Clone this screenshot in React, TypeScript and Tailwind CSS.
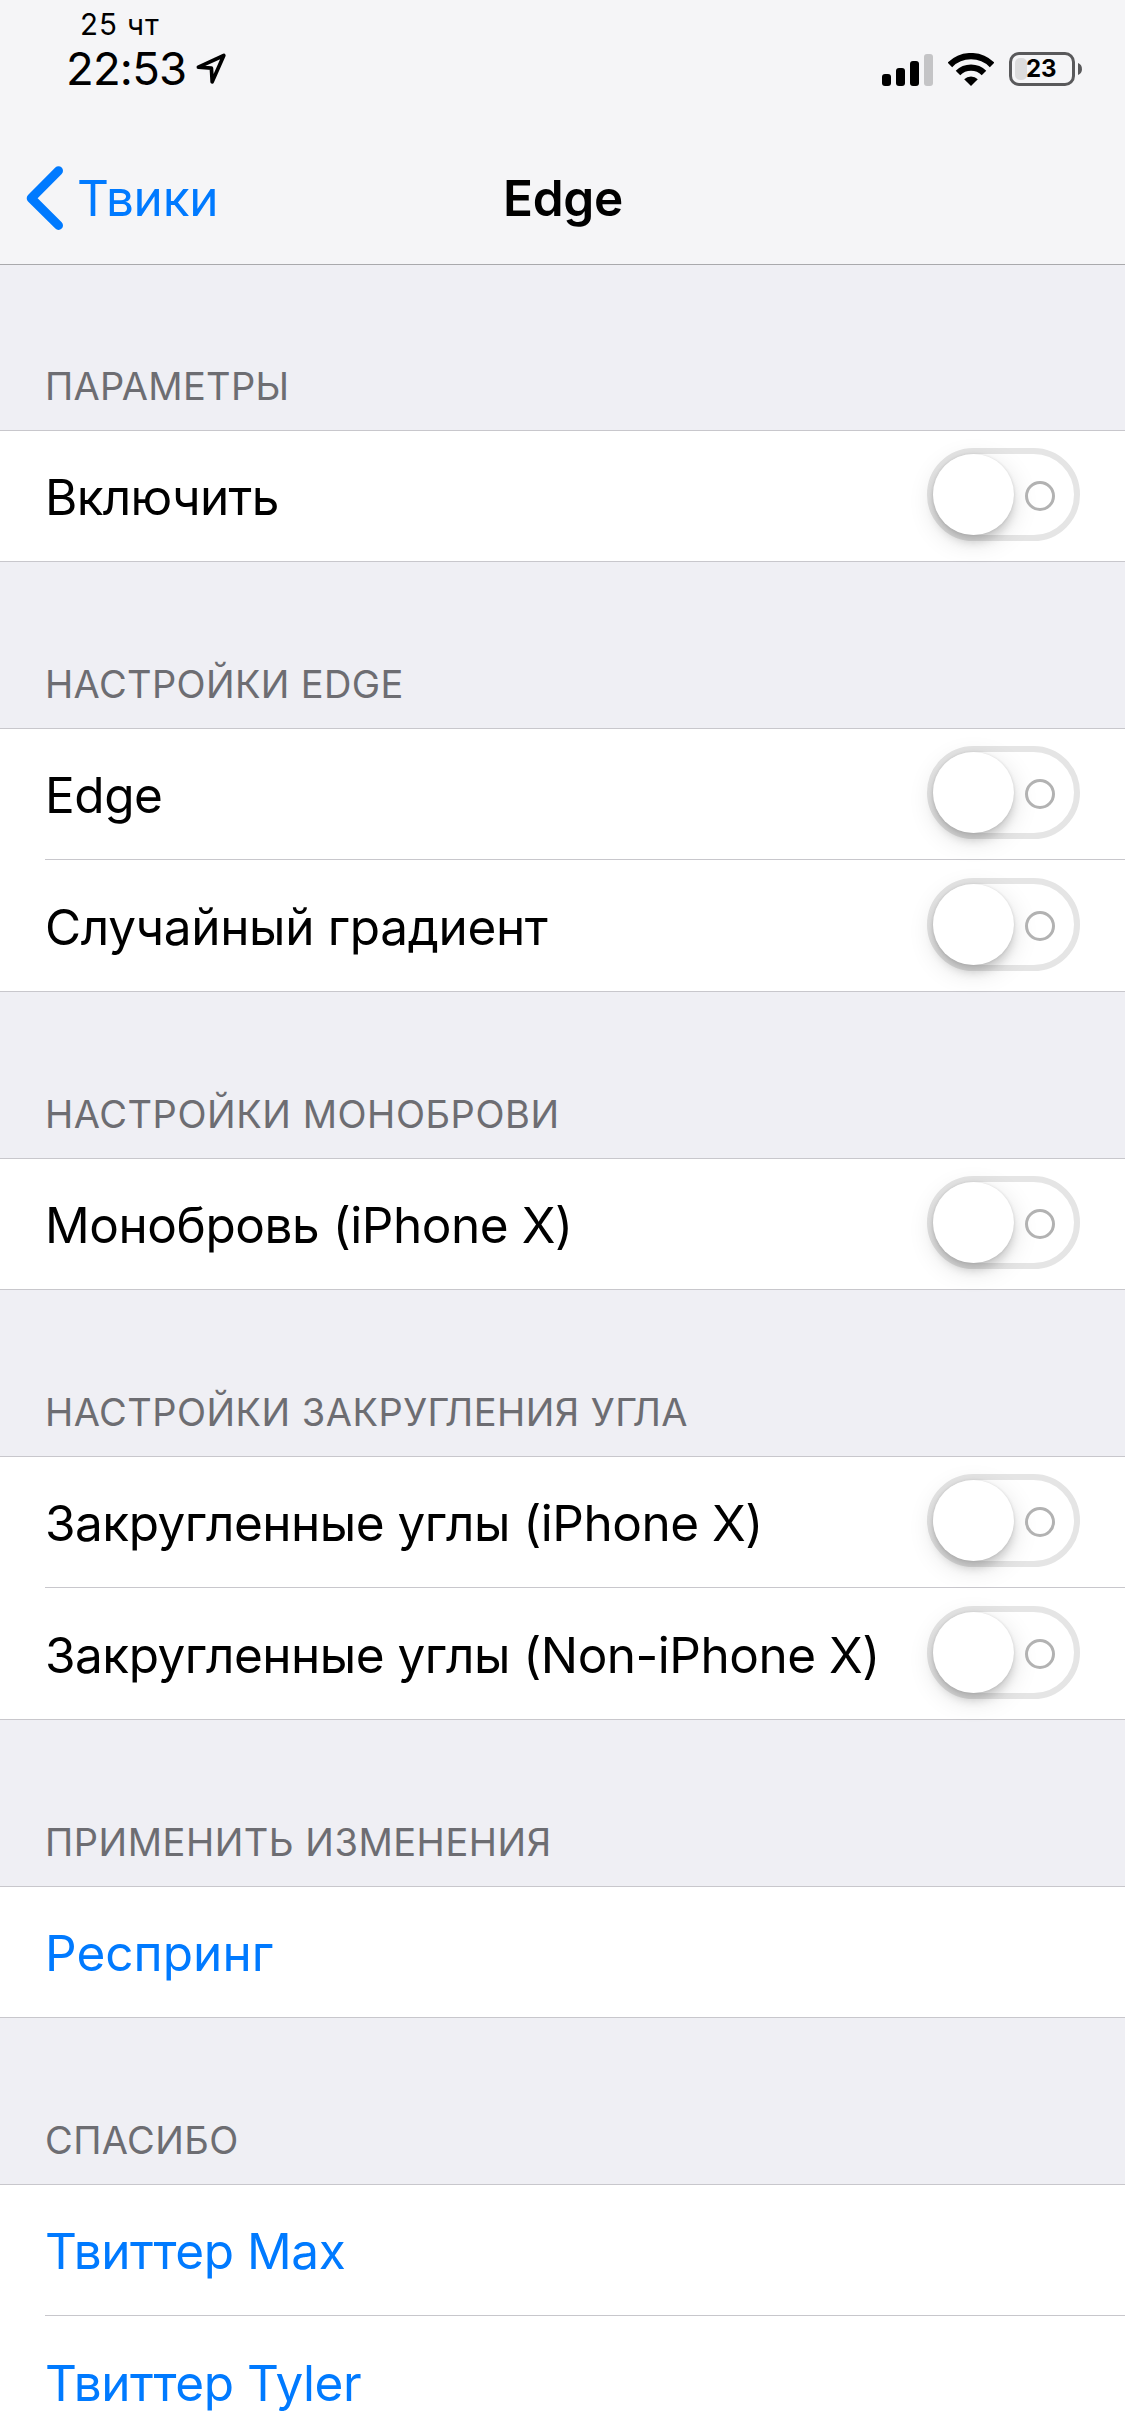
import clsx from 'clsx'

type Row = { label: string; kind: 'switch' | 'link'; tracking?: string }
type Group = { title: string; tracking: string; rows: Row[] }

const groups: Group[] = [
  {
    title: 'ПАРАМЕТРЫ',
    tracking: 'tracking-[0.3px]',
    rows: [{ label: 'Включить', kind: 'switch', tracking: 'tracking-[-0.7px]' }],
  },
  {
    title: 'НАСТРОЙКИ EDGE',
    tracking: 'tracking-[0.36px]',
    rows: [
      { label: 'Edge', kind: 'switch' },
      { label: 'Случайный градиент', kind: 'switch', tracking: 'tracking-[-0.33px]' },
    ],
  },
  {
    title: 'НАСТРОЙКИ МОНОБРОВИ',
    tracking: 'tracking-[0.54px]',
    rows: [{ label: 'Монобровь (iPhone X)', kind: 'switch', tracking: 'tracking-[-0.45px]' }],
  },
  {
    title: 'НАСТРОЙКИ ЗАКРУГЛЕНИЯ УГЛА',
    tracking: 'tracking-[0.46px]',
    rows: [
      { label: 'Закругленные углы (iPhone X)', kind: 'switch', tracking: 'tracking-[-0.5px]' },
      { label: 'Закругленные углы (Non-iPhone X)', kind: 'switch', tracking: 'tracking-[-0.5px]' },
    ],
  },
  {
    title: 'ПРИМЕНИТЬ ИЗМЕНЕНИЯ',
    tracking: 'tracking-[0.52px]',
    rows: [{ label: 'Респринг', kind: 'link', tracking: 'tracking-[0.04px]' }],
  },
  {
    title: 'СПАСИБО',
    tracking: 'tracking-[0.4px]',
    rows: [
      { label: 'Твиттер Max', kind: 'link' },
      { label: 'Твиттер Tyler', kind: 'link' },
    ],
  },
]

function LocationArrow() {
  return (
    <svg className="mt-3 ml-[10px] h-8 w-8" viewBox="0 0 32 32" fill="none">
      <path
        d="M2.4 14.1 27.8 2.5 16.2 28.8 15.4 15.2Z"
        stroke="#000"
        strokeWidth="3.7"
        strokeLinejoin="round"
      />
    </svg>
  )
}

function Signal() {
  return (
    <div className="flex h-8 items-end gap-[5px]">
      <span className="h-3 w-[9px] rounded-[3px] bg-black" />
      <span className="h-[18px] w-[9px] rounded-[3px] bg-black" />
      <span className="h-[25px] w-[9px] rounded-[3px] bg-black" />
      <span className="h-8 w-[9px] rounded-[3px] bg-[#c4c4c6]" />
    </div>
  )
}

function Wifi() {
  return (
    <svg className="ml-[15px] h-[33px] w-[46px]" viewBox="0 0 46 33" fill="none">
      <path d="M1.9 11.9a29.8 29.8 0 0 1 42.2 0" stroke="#000" strokeWidth="6.4" />
      <path d="M10 20a18.4 18.4 0 0 1 26 0" stroke="#000" strokeWidth="6.4" />
      <path d="M16.2 26.2a9.7 9.7 0 0 1 13.6 0L23 33Z" fill="#000" />
    </svg>
  )
}

function Battery() {
  return (
    <div className="ml-[15px] flex items-center">
      <div className="relative h-[34px] w-[66px] rounded-[10px] border-[3px] border-[#59595b]">
        <span className="absolute top-[3px] left-[3px] h-[22px] w-3 rounded-[5px] bg-[#dcdcdd]" />
        <span className="absolute top-0 left-[14px] text-[24px] leading-7 font-bold">23</span>
      </div>
      <svg className="ml-[3px] h-3 w-1" viewBox="0 0 4 12">
        <path d="M0 0C5.3 1.6 5.3 10.4 0 12Z" fill="#59595b" />
      </svg>
    </div>
  )
}

function Toggle() {
  return (
    <div className="mt-[18px] h-[93px] w-[153px] shrink-0 rounded-full border-6 border-[#e5e5e5]">
      <div className="flex items-center">
        <div className="h-[81px] w-[81px] rounded-full bg-white shadow-[0_8px_10px_-1px_rgba(0,0,0,0.15),0_0_3px_rgba(0,0,0,0.12),0_7px_26px_rgba(0,0,0,0.13)]" />
        <div className="mt-[3px] ml-[11px] h-[30px] w-[30px] rounded-full border-3 border-[#b2b2b2]" />
      </div>
    </div>
  )
}

function Header() {
  return (
    <header className="h-[265px] border-b border-[#a9a9ac] bg-[#f5f5f7]">
      <div className="flex h-[132px] justify-between">
        <div className="pt-[7px]">
          <p className="pl-[80px] text-[29.5px] leading-[34px] tracking-[0.93px]">25 чт</p>
          <div className="flex pl-[66px]">
            <time className="text-[45.5px] leading-[55px] tracking-[-0.82px]">22:53</time>
            <LocationArrow />
          </div>
        </div>
        <div className="mt-[52px] flex h-[34px] items-end pr-[43px]">
          <Signal />
          <Wifi />
          <Battery />
        </div>
      </div>
      <nav className="grid h-[132px] grid-cols-3 items-center text-[49.5px] leading-[60px]">
        <a className="flex items-center pl-[26px] text-[#007aff]">
          <svg className="h-16 w-[38px]" viewBox="0 0 38 64" fill="none">
            <path
              d="M32.5 4.8 5.2 32.2 32.5 59.4"
              stroke="currentColor"
              strokeWidth="9"
              strokeLinecap="round"
              strokeLinejoin="round"
            />
          </svg>
          <span className="ml-[13px] tracking-[-0.25px]">Твики</span>
        </a>
        <h1 className="pl-px text-center font-semibold tracking-[-0.3px]">Edge</h1>
      </nav>
    </header>
  )
}

export default function App() {
  return (
    <div className="h-[2436px] w-[1125px] overflow-hidden bg-[#efeff4] font-[Inter,sans-serif] text-black">
      <Header />
      {groups.map((group, i) => (
        <section key={group.title}>
          <h2
            className={clsx(
              'flex items-end pb-5 pl-[45px] text-[38px] leading-[48px] text-[#6d6d72]',
              i === 0 ? 'h-[165px]' : 'h-[166px]',
              group.tracking,
            )}
          >
            {group.title}
          </h2>
          <ul className="bg-white shadow-[inset_0_1px_#c8c7cc,inset_0_-1px_#c8c7cc]">
            {group.rows.map((row) => (
              <li key={row.label} className="group h-[132px] pl-[45px]">
                <div className="flex h-full justify-between border-b border-[#c8c7cc] pr-[45px] group-last:border-transparent">
                  <span
                    className={clsx(
                      'pt-[37px] text-[49.5px] leading-[60px]',
                      row.tracking ?? 'tracking-[-0.44px]',
                      row.kind === 'link' && 'text-[#007aff]',
                    )}
                  >
                    {row.label}
                  </span>
                  {row.kind === 'switch' && <Toggle />}
                </div>
              </li>
            ))}
          </ul>
        </section>
      ))}
    </div>
  )
}
